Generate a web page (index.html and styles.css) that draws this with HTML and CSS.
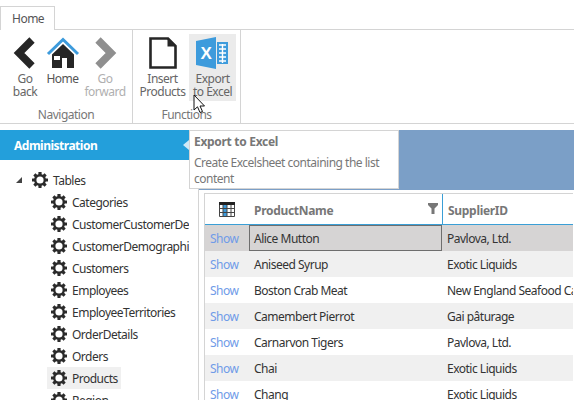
FILE: index.html
```html
<!DOCTYPE html>
<html lang="en">
<head>
  <meta charset="UTF-8">
  <meta name="viewport" content="width=device-width, initial-scale=1.0">
  <title>Administration</title>
  <link rel="stylesheet" href="styles.css">
</head>
<body>

<svg class="defs" width="0" height="0">
  <symbol id="gear" viewBox="0 0 16 16">
    <circle cx="8" cy="8" r="4.6" fill="none" stroke="#2b2b2b" stroke-width="2.8"/>
    <g fill="#2b2b2b">
      <rect x="6.4" y="0" width="3.2" height="16" rx="0.4"/>
      <rect x="6.4" y="0" width="3.2" height="16" rx="0.4" transform="rotate(45 8 8)"/>
      <rect x="6.4" y="0" width="3.2" height="16" rx="0.4" transform="rotate(90 8 8)"/>
      <rect x="6.4" y="0" width="3.2" height="16" rx="0.4" transform="rotate(135 8 8)"/>
    </g>
    <circle cx="8" cy="8" r="3.6" fill="#fff"/>
  </symbol>
</svg>

<div class="tabstrip">
  <div class="tab">Home</div>
</div>

<div class="ribbon">
  <section class="group group-nav">
    <div class="buttons">
      <div class="btn btn-back">
        <svg width="24" height="32" viewBox="0 0 24 32"><path d="M19 3 L6 16 L19 29" fill="none" stroke="#262626" stroke-width="7.5"/></svg>
        <span>Go<br>back</span>
      </div>
      <div class="btn btn-home">
        <svg width="34" height="32" viewBox="0 0 34 32">
          <path d="M2 17 L17 2.5 L32 17" fill="none" stroke="#3d9bdc" stroke-width="3"/>
          <path d="M17 7 L28 17.5 V31 H21 V21 H16 V31 H6 V17.5 Z M8 19 V23 H14 V19 Z" fill="#262626" fill-rule="evenodd"/>
        </svg>
        <span>Home</span>
      </div>
      <div class="btn btn-forward">
        <svg width="24" height="32" viewBox="0 0 24 32"><path d="M5 3 L18 16 L5 29" fill="none" stroke="#8f8f8f" stroke-width="7.5"/></svg>
        <span>Go<br>forward</span>
      </div>
    </div>
    <div class="group-label">Navigation</div>
  </section>
  <section class="group group-fn">
    <div class="buttons">
      <div class="btn btn-insert">
        <svg width="28" height="32" viewBox="0 0 28 32">
          <path d="M1.5 1.5 H19 L26.5 9 V30.5 H1.5 Z" fill="#fff" stroke="#262626" stroke-width="2.6"/>
          <path d="M18.5 2 V9.5 H26 Z" fill="#262626"/>
        </svg>
        <span>Insert<br>Products</span>
      </div>
      <div class="btn btn-export">
        <svg width="33" height="32" viewBox="0 0 33 32">
          <path d="M0 4 L20 0 V32 L0 28 Z" fill="#3d9bdc"/>
          <rect x="21" y="5" width="11" height="22" fill="#3d9bdc"/>
          <path d="M23 8 H30 M23 12 H30 M23 16 H30 M23 20 H30 M23 24 H30 M26.5 7 V26" stroke="#fff" stroke-width="1.4" fill="none"/>
          <text x="10" y="22" class="xl">X</text>
        </svg>
        <span>Export<br>to Excel</span>
      </div>
    </div>
    <div class="group-label">Functions</div>
  </section>
</div>

<div class="main">
  <aside class="sidebar">
    <div class="side-head">
      <span>Administration</span>
      <i class="collapse"></i>
    </div>
    <div class="tree">
      <div class="node root"><i class="expander"></i><svg class="gear"><use href="#gear"/></svg>Tables</div>
      <div class="node"><svg class="gear"><use href="#gear"/></svg>Categories</div>
      <div class="node"><svg class="gear"><use href="#gear"/></svg>CustomerCustomerDemo</div>
      <div class="node"><svg class="gear"><use href="#gear"/></svg>CustomerDemographics</div>
      <div class="node"><svg class="gear"><use href="#gear"/></svg>Customers</div>
      <div class="node"><svg class="gear"><use href="#gear"/></svg>Employees</div>
      <div class="node"><svg class="gear"><use href="#gear"/></svg>EmployeeTerritories</div>
      <div class="node"><svg class="gear"><use href="#gear"/></svg>OrderDetails</div>
      <div class="node"><svg class="gear"><use href="#gear"/></svg>Orders</div>
      <div class="node active"><svg class="gear"><use href="#gear"/></svg>Products</div>
      <div class="node"><svg class="gear"><use href="#gear"/></svg>Region</div>
    </div>
  </aside>

  <div class="content">
    <div class="banner"></div>
    <div class="grid">
      <div class="row head">
        <div class="cell c-show">
          <svg width="16" height="15" viewBox="0 0 16 15">
            <rect x="0" y="0" width="16" height="3" fill="#222"/>
            <rect x="4" y="3" width="4" height="12" fill="#3d9bdc"/>
            <path d="M0.5 3 V14.5 H15.5 V3 M0.5 6.5 H15.5 M0.5 10.5 H15.5 M4 3 V15 M8 3 V15 M12 3 V15" stroke="#444" stroke-width="1" fill="none"/>
          </svg>
        </div>
        <div class="cell c-name">ProductName
          <svg class="filter" width="10" height="11" viewBox="0 0 10 11"><path d="M0 0 H10 V2 L6.5 5.5 V11 H3.5 V5.5 L0 2 Z" fill="#777"/></svg>
        </div>
        <div class="cell c-supplier">SupplierID</div>
      </div>
      <div class="row selected"><div class="cell c-show"><a>Show</a></div><div class="cell c-name">Alice Mutton</div><div class="cell c-supplier">Pavlova, Ltd.</div></div>
      <div class="row"><div class="cell c-show"><a>Show</a></div><div class="cell c-name">Aniseed Syrup</div><div class="cell c-supplier">Exotic Liquids</div></div>
      <div class="row"><div class="cell c-show"><a>Show</a></div><div class="cell c-name">Boston Crab Meat</div><div class="cell c-supplier">New England Seafood Cannery</div></div>
      <div class="row"><div class="cell c-show"><a>Show</a></div><div class="cell c-name">Camembert Pierrot</div><div class="cell c-supplier">Gai pâturage</div></div>
      <div class="row"><div class="cell c-show"><a>Show</a></div><div class="cell c-name">Carnarvon Tigers</div><div class="cell c-supplier">Pavlova, Ltd.</div></div>
      <div class="row"><div class="cell c-show"><a>Show</a></div><div class="cell c-name">Chai</div><div class="cell c-supplier">Exotic Liquids</div></div>
      <div class="row"><div class="cell c-show"><a>Show</a></div><div class="cell c-name">Chang</div><div class="cell c-supplier">Exotic Liquids</div></div>
    </div>
  </div>
</div>

<div class="tooltip">
  <strong>Export to Excel</strong>
  <p>Create Excelsheet containing the list content</p>
</div>

<svg class="cursor" width="13" height="20" viewBox="0 0 13 20">
  <path d="M1 1 V16 L4.5 12.8 L7 18.5 L9.5 17.5 L7 12 H11.5 Z" fill="#fff" stroke="#111" stroke-width="1"/>
</svg>

</body>
</html>
```

FILE: styles.css
```css
* { box-sizing: border-box; }

html, body {
  height: 400px;
  overflow: hidden;
}

body {
  margin: 0;
  position: relative;
  background: #fff;
  color: #333;
  font-family: "Noto Sans", "Open Sans", sans-serif;
  font-size: 12px;
  letter-spacing: -0.5px;
}

.defs {
  position: absolute;
}

.tabstrip {
  height: 30px;
  padding-top: 6px;
  border-bottom: 1px solid #d4d4d4;
}

.tab {
  width: 55px;
  height: 24px;
  padding: 3px 0 0 11px;
  background: #fff;
  border: 1px solid #d4d4d4;
  border-bottom: none;
  color: #555;
}

.ribbon {
  display: flex;
  height: 94px;
  border-bottom: 1px solid #d4d4d4;
}

.group {
  display: flex;
  flex-direction: column;
  border-right: 1px solid #d4d4d4;
}

.group-nav { width: 133px; }
.group-fn { width: 108px; }

.buttons {
  display: flex;
  flex: 1;
  padding-top: 4px;
}

.btn {
  display: flex;
  flex-direction: column;
  align-items: center;
  height: 67px;
  padding-top: 3px;
  line-height: 13px;
  text-align: center;
  color: #666;
}

.btn svg {
  flex: none;
  margin-bottom: 3px;
}

.btn-back { width: 40px; margin-left: 5px; }
.btn-home { width: 35px; color: #555; }
.btn-forward { width: 46px; margin-left: 2px; color: #b0b0b0; }

.btn-insert { width: 53px; margin-left: 3px; }
.btn-export { width: 47px; background: #ebebeb; }

.xl {
  fill: #fff;
  font-family: "Liberation Sans", sans-serif;
  font-size: 17px;
  font-weight: 700;
  text-anchor: middle;
}

.group-label {
  height: 20px;
  line-height: 24px;
  text-align: center;
  color: #777;
}

.main {
  display: flex;
  margin-top: 6px;
}

.sidebar {
  width: 199px;
  height: 270px;
  overflow: hidden;
  border-right: 1px solid #d4d4d4;
}

.side-head {
  display: flex;
  align-items: center;
  justify-content: space-between;
  width: 189px;
  height: 30px;
  padding: 0 0 0 14px;
  background: #239fdb;
  color: #fff;
  font-weight: 700;
}

.collapse {
  width: 0;
  height: 0;
  border-style: solid;
  border-width: 5px 6px 5px 0;
  border-color: transparent #cfe9f7 transparent transparent;
}

.tree {
  width: 189px;
  padding-top: 9px;
  overflow: hidden;
}

.node {
  display: flex;
  align-items: center;
  gap: 5px;
  width: max-content;
  height: 22px;
  margin-left: 47px;
  padding: 0 3px 0 4px;
  white-space: nowrap;
}

.node.root {
  margin-left: 16px;
  padding: 0;
  gap: 5px;
}

.node.active { background: #f0f0f0; }

.gear {
  width: 16px;
  height: 16px;
  flex: none;
}

.expander {
  width: 0;
  height: 0;
  margin-right: 5px;
  border-style: solid;
  border-width: 0 0 6px 6px;
  border-color: transparent transparent #444 transparent;
}

.content {
  flex: 1;
  min-width: 0;
  overflow: hidden;
}

.banner {
  height: 60px;
  background: #7b9fc7;
}

.grid {
  width: 369px;
  margin: 3px 0 0 5px;
  border-left: 1px solid #d4d4d4;
  border-top: 1px solid #d4d4d4;
}

.row {
  display: grid;
  grid-template-columns: 44px 193px 1fr;
  height: 26px;
  line-height: 27px;
  white-space: nowrap;
}

.row:nth-child(odd) { background: #f0f0f0; }

.row.head {
  height: 31px;
  background: #fff;
  border-bottom: 1px solid #3a9fd6;
  line-height: 33px;
  color: #777;
  font-weight: 700;
  letter-spacing: -0.3px;
}

.row.selected { background: #d6d4d4; }

.cell {
  padding-left: 5px;
  overflow: hidden;
}

.c-show { padding-left: 5px; }
.c-show a { color: #6f9be8; }

.head .c-show {
  padding: 8px 0 0 14px;
  line-height: 0;
}

.head .c-name {
  position: relative;
}

.head .c-supplier {
  border-left: 1px solid #3a9fd6;
}

.filter {
  position: absolute;
  right: 4px;
  top: 9px;
}

.selected .c-name {
  border: 1px solid #6e6e6e;
  padding-left: 4px;
  line-height: 25px;
}

.tooltip {
  position: absolute;
  left: 189px;
  top: 130px;
  width: 210px;
  height: 59px;
  padding: 3px 4px 0 4px;
  background: #fff;
  border: 1px solid #d4d4d4;
  color: #777;
  line-height: 16px;
}

.tooltip strong {
  display: block;
  margin-bottom: 5px;
  letter-spacing: -0.3px;
}

.tooltip p {
  margin: 0;
}

.cursor {
  position: absolute;
  left: 193px;
  top: 94px;
}
```
